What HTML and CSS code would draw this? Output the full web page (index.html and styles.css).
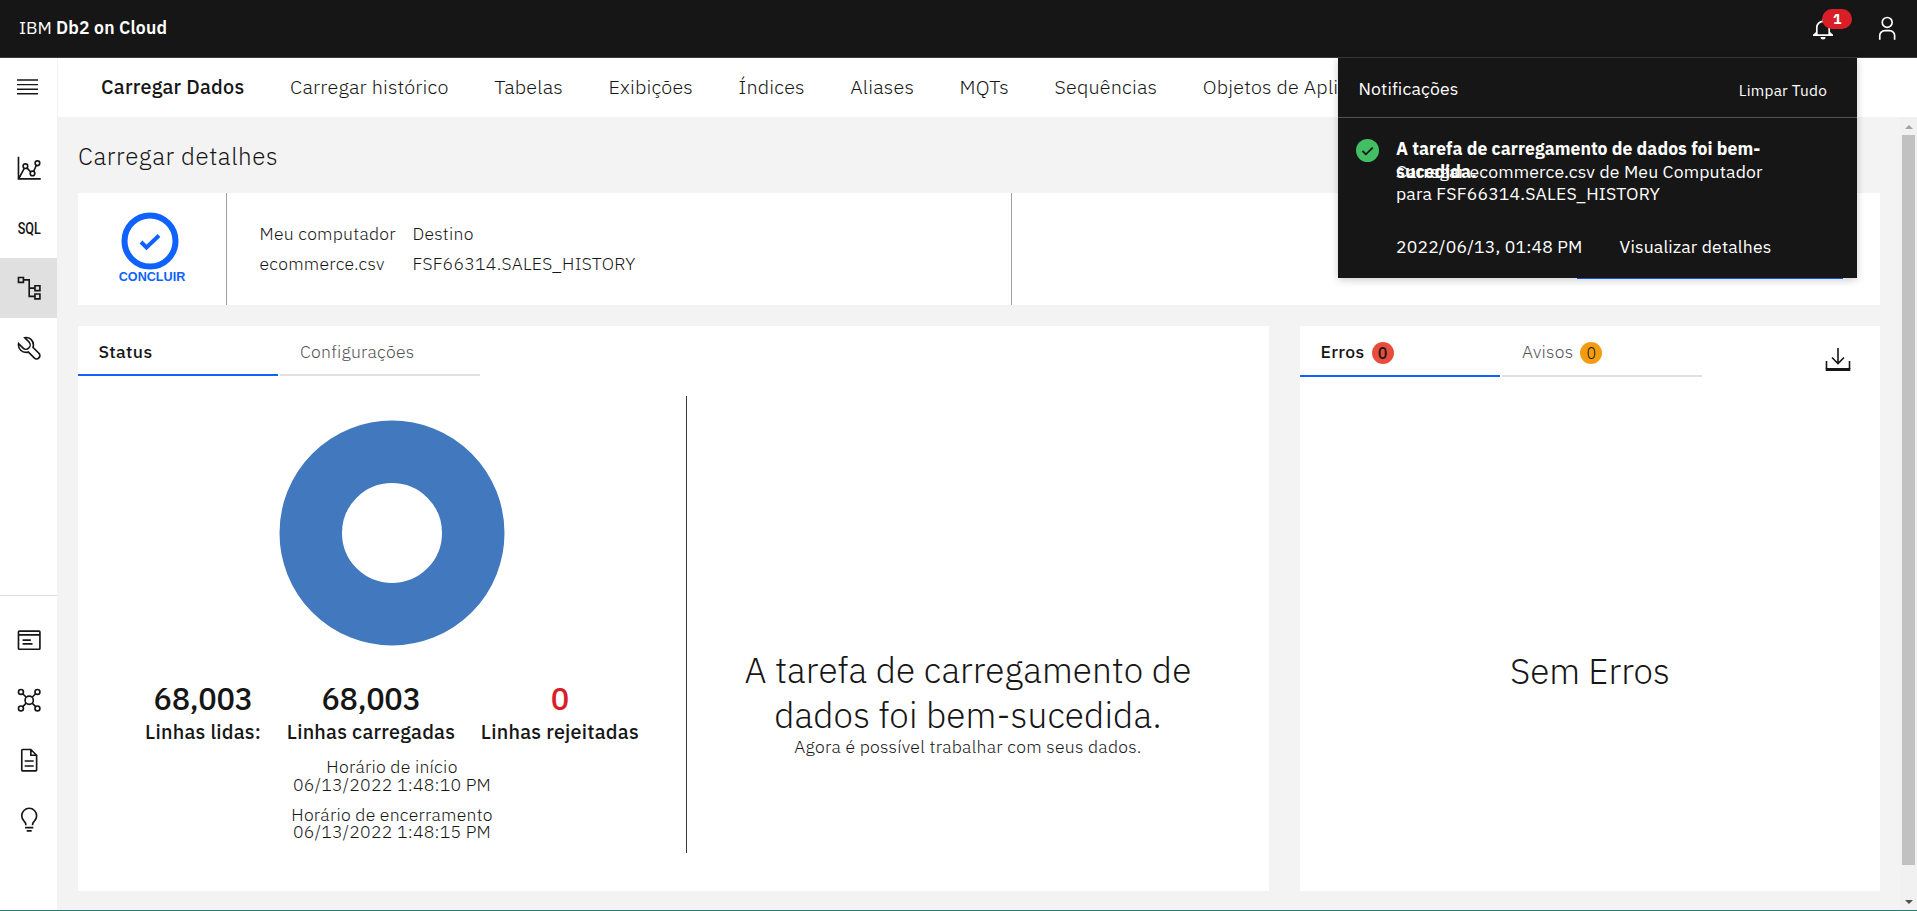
FILE: index.html
```
<!DOCTYPE html>
<html lang="pt-BR">
<head>
<meta charset="utf-8">
<title>IBM Db2 on Cloud</title>
<link rel="stylesheet" href="styles.css">
</head>
<body>
<div class="app">
  <header class="topbar">
    <div class="brand">IBM <b>Db2 on Cloud</b></div>
    <div class="actions">
      <div class="bell">
        <svg class="ico-bell" viewBox="0 0 22 22"><path d="M1 17.200h20M4.800 17V9.500a6.200 6.200 0 0 1 12.400 0V17M11 1v2.500M2 17l3-3M20 17l-3-3"/><path class="clapper" d="M8.500 19h5a2.500 2.500 0 0 1-5 0z"/></svg>
        <span class="count">1</span>
      </div>
      <svg class="ico-user" viewBox="0 0 32 32"><path fill="#fff" d="M16 4a5 5 0 1 1-5 5 5 5 0 0 1 5-5m0-2a7 7 0 1 0 7 7 7 7 0 0 0-7-7zM26 30h-2v-5a5 5 0 0 0-5-5h-6a5 5 0 0 0-5 5v5H6v-5a7 7 0 0 1 7-7h6a7 7 0 0 1 7 7z"/></svg>
    </div>
  </header>
  <div class="shell">
    <aside class="rail">
      <div class="rail-menu"><svg viewBox="0 0 21 16"><path d="M0 1h21M0 5.600h21M0 10.200h21M0 14.700h21"/></svg></div>
      <div class="rail-item"><svg viewBox="0 0 32 32"><path d="M3 2v27h27M3.700 28 10 16.300M13.200 15.600l4.600 5M21.300 20l3.400-7.600"/><circle cx="11.400" cy="13.600" r="2.800"/><circle cx="20" cy="22.300" r="2.800"/><circle cx="26" cy="10" r="2.800"/></svg></div>
      <div class="rail-item"><svg viewBox="0 0 32 32"><text x="2" y="22.900" textLength="28" lengthAdjust="spacingAndGlyphs" class="sql">SQL</text></svg></div>
      <div class="rail-item active"><svg viewBox="0 0 32 32"><path d="M3 3h6v6H3zM23 13h6v6h-6zM23 23h6v6h-6zM9 6h7v20h7M16 16h7"/></svg></div>
      <div class="rail-item"><svg viewBox="0 0 32 32"><path class="solid" d="M12.100 2a9.800 9.800 0 0 0-3.500.6L15 9.100A4.100 4.100 0 0 1 15 15a4.100 4.100 0 0 1-5.900 0L2.600 8.600A9.800 9.800 0 0 0 2 12.100 10.140 10.140 0 0 0 12.100 22.200a10.900 10.900 0 0 0 2.600-.3l6.700 6.700A5 5 0 0 0 28.500 21.500l-6.700-6.700a10.900 10.900 0 0 0 .3-2.600A10 10 0 0 0 12.100 2Zm8 10.100a7.610 7.610 0 0 1-.3 2.100l-.3 1.100.8.8 6.700 6.700A2.900 2.900 0 0 1 27 27a2.900 2.900 0 0 1-4.200 0l-6.700-6.700-.8-.8-1.100.3a7.610 7.610 0 0 1-2.100.3 8.270 8.270 0 0 1-5.700-2.300A7.630 7.630 0 0 1 4 12.700l3.600 3.600a6.100 6.100 0 0 0 8.700 0 6.200 6.200 0 0 0 0-8.700L12.700 4a8.270 8.270 0 0 1 5.100 2.400A8.190 8.190 0 0 1 20.100 12.100Z"/></svg></div>
      <div class="rail-gap"></div>
      <div class="rail-item"><svg viewBox="0 0 32 32"><rect x="3" y="5" width="26" height="22" rx="1"/><path d="M3 9.500h26M8 16h10M8 20.500h12"/></svg></div>
      <div class="rail-item"><svg viewBox="0 0 32 32"><circle cx="16" cy="16" r="5"/><circle cx="6" cy="6" r="3"/><circle cx="26" cy="6" r="3"/><circle cx="6" cy="26" r="3"/><circle cx="26" cy="26" r="3"/><path d="m8.200 8.200 4.200 4.200m11.400-4.200-4.200 4.200m-11.400 11.400 4.200-4.200m11.400 4.200-4.200-4.200"/></svg></div>
      <div class="rail-item"><svg viewBox="0 0 32 32"><path d="M18 3H8a1 1 0 0 0-1 1v24a1 1 0 0 0 1 1h16a1 1 0 0 0 1-1V10zM18 3v7h7M10.500 17h11M10.500 23h11"/></svg></div>
      <div class="rail-item"><svg viewBox="0 0 32 32"><path d="M11 25h10M13 29h6M12 22c0-3-1.200-3.800-2.400-5.100A9 9 0 1 1 22.400 16.900C21.200 18.200 20 19 20 22"/></svg></div>
    </aside>
    <main class="main">
      <nav class="nav">
        <a class="on">Carregar Dados</a><a>Carregar histórico</a><a>Tabelas</a><a>Exibições</a><a>Índices</a><a>Aliases</a><a>MQTs</a><a>Sequências</a><a>Objetos de Aplicativo</a>
      </nav>
      <div class="scroller">
        <div class="content">
          <h1>Carregar detalhes</h1>
          <section class="summary">
            <div class="done">
              <svg viewBox="0 0 58 58"><circle cx="29" cy="29" r="25.500"/><path d="m20 30 5.500 5.500L38 23.500"/></svg>
              <span>CONCLUIR</span>
            </div>
            <div class="source">
              <dl><dt>Meu computador</dt><dd>ecommerce.csv</dd></dl>
              <dl><dt>Destino</dt><dd>FSF66314.SALES_HISTORY</dd></dl>
            </div>
            <div class="next"><div class="next-btn"></div></div>
          </section>
          <div class="panels">
            <section class="panel status">
              <div class="tabs"><div class="tab on"><span>Status</span></div><div class="tab"><span>Configurações</span></div></div>
              <div class="status-body">
                <div class="stats">
                  <svg class="donut" viewBox="0 0 226 226"><circle cx="113" cy="113" r="81.250"/></svg>
                  <div class="figures">
                    <div><strong>68,003</strong><span>Linhas lidas:</span></div>
                    <div><strong>68,003</strong><span>Linhas carregadas</span></div>
                    <div><strong class="red">0</strong><span>Linhas rejeitadas</span></div>
                  </div>
                  <div class="time"><p>Horário de início</p><p>06/13/2022 1:48:10 PM</p></div>
                  <div class="time end"><p>Horário de encerramento</p><p>06/13/2022 1:48:15 PM</p></div>
                </div>
                <div class="message"><h2>A tarefa de carregamento de<br>dados foi bem-sucedida.</h2><p>Agora é possível trabalhar com seus dados.</p></div>
              </div>
            </section>
            <section class="panel errors">
              <div class="errors-top">
                <div class="tabs"><div class="tab on"><span>Erros</span><em class="chip bad">0</em></div><div class="tab"><span>Avisos</span><em class="chip warn">0</em></div></div>
                <svg class="download" viewBox="0 0 26 26"><path d="M13 1v15M7 10.500l6 6 6-6M1.500 14v8M24.500 14v8"/><path class="tray" d="M.7 22.500h24.600"/></svg>
              </div>
              <div class="none">Sem Erros</div>
            </section>
          </div>
        </div>
        <div class="bar"><i class="up"></i><i class="thumb"></i><i class="down"></i></div>
      </div>
    </main>
  </div>
  <div class="edge"></div>
  <section class="toast">
    <header><span>Notificações</span><span class="clear">Limpar Tudo</span></header>
    <div class="toast-body">
      <svg class="ok" viewBox="0 0 23 23"><circle cx="11.500" cy="11.500" r="11.500"/><path d="m6.500 12 3.400 3.300 6.800-6.700"/></svg>
      <div class="toast-text">
        <div class="title">A tarefa de carregamento de dados foi bem-<br>sucedida.</div>
        <div class="desc">Carregar ecommerce.csv de Meu Computador<br>para FSF66314.SALES_HISTORY</div>
        <div class="foot"><span>2022/06/13, 01:48 PM</span><span>Visualizar detalhes</span></div>
      </div>
    </div>
  </section>
</div>
</body>
</html>
```
FILE: styles.css
```
* { box-sizing: border-box; margin: 0; padding: 0; }
body { font-family: "IBM Plex Sans", Roboto, "Liberation Sans", sans-serif; font-size: 17.6px; font-weight: 300; color: #161616; background: #fff; overflow: hidden; }
.app { position: relative; width: 1917px; height: 911px; display: flex; flex-direction: column; }
.topbar { height: 58px; background: #161616; border-bottom: 1px solid #393939; display: flex; justify-content: space-between; color: #fff; }
.brand { padding: 16px 0 0 19px; line-height: 24px; font-size: 17.6px; font-weight: 400; white-space: nowrap; }
.brand b { font-weight: 600; letter-spacing: .18px; }
.actions { display: flex; }
.bell { position: relative; margin: 18px 40px 0 0; width: 22px; height: 22px; }
.ico-bell { width: 22px; height: 22px; display: block; fill: none; stroke: #fff; stroke-width: 1.7; }
.ico-bell .clapper { fill: #fff; stroke: none; }
.count { position: absolute; left: 10px; top: -9px; width: 30px; height: 20px; border-radius: 10px; background: #da1e28; font-weight: 700; font-size: 14px; line-height: 20px; text-align: center; }
.ico-user { width: 26.4px; height: 26.4px; margin: 15px 16.5px 0 0; }
.shell { flex: 1; display: flex; min-height: 0; }
.rail { width: 58px; border-right: 1px solid #f3f3f3; display: flex; flex-direction: column; }
.rail-menu { height: 80px; padding: 21px 0 0 17px; }
.rail-menu svg { display: block; width: 21px; height: 16px; fill: none; stroke: #161616; stroke-width: 1.4; }
.rail-item { height: 60px; width: 57px; display: flex; align-items: center; justify-content: center; padding: 1px 0 0 2px; }
.rail-item.active { background: #e0e0e0; }
.rail-item svg { width: 26.4px; height: 26.4px; fill: none; stroke: #161616; stroke-width: 2; overflow: visible; }
.rail-item .solid { fill: #161616; stroke: none; }
.rail-item .sql { font: 500 20px Roboto, sans-serif; fill: #161616; stroke: none; }
.rail-gap { height: 218px; border-bottom: 1px solid #e0e0e0; width: 57px; margin-bottom: 14px; }
.main { flex: 1; display: flex; flex-direction: column; min-width: 0; }
.nav { height: 59px; display: flex; gap: 45.6px; padding: 15px 0 0 43px; font-size: 19.8px; line-height: 28px; letter-spacing: .18px; white-space: nowrap; overflow: hidden; }
.nav a { flex: none; }
.nav .on { font-weight: 500; letter-spacing: .24px; }
.scroller { flex: 1; display: flex; background: #f3f3f3; min-height: 0; }
.content { width: 1822px; padding-left: 20px; }
h1 { font-size: 24.2px; font-weight: 300; line-height: 32px; padding: 23px 0 21px; letter-spacing: .57px; white-space: nowrap; }
.summary { height: 112px; background: #fff; display: flex; }
.done { width: 149px; border-right: 1px solid #a0a0a0; display: flex; flex-direction: column; align-items: center; padding: 19px 4px 0 0; }
.done svg { width: 58px; height: 58px; fill: none; stroke: #0f62fe; stroke-width: 6; flex: none; }
.done path { stroke-width: 4; }
.done span { font: 700 12.6px/14px "Liberation Sans", sans-serif; color: #0f62fe; margin-left: 4px; }
.source { width: 785px; border-right: 1px solid #a0a0a0; display: flex; padding: 26px 0 0 32.5px; line-height: 30px; letter-spacing: .25px; white-space: nowrap; }
.source dl { width: 153px; }
.next { flex: 1; display: flex; justify-content: flex-end; align-items: flex-start; padding-right: 37px; }
.next-btn { width: 266px; height: 52px; margin-top: 34px; background: #0f62fe; }
.panels { display: flex; gap: 31px; padding-top: 21px; }
.panel { background: #fff; height: 565px; }
.status { width: 1191px; }
.errors { width: 580px; }
.tabs { display: flex; gap: 2px; }
.tab { width: 200px; height: 50px; border-bottom: 2px solid #e0e0e0; padding: 14px 0 0 20px; line-height: 24px; letter-spacing: .25px; color: #525252; display: flex; }
.tab.on { font-weight: 500; color: #161616; border-color: #0f62fe; letter-spacing: .35px; padding-left: 20.5px; }
.errors .tab { height: 51px; }
.status-body { display: flex; padding-top: 20px; }
.stats { width: 609px; height: 457px; border-right: 1px solid #393939; display: flex; flex-direction: column; align-items: center; padding: 24px 0 0 20px; }
.donut { width: 226px; height: 226px; fill: none; stroke: #4178be; stroke-width: 62.5; flex: none; }
.figures { display: flex; gap: 25.6px; margin-top: 33px; text-align: center; white-space: nowrap; font-weight: 500; }
.figures strong { display: block; font-size: 30.8px; line-height: 38px; font-weight: 500; letter-spacing: -.35px; }
.figures span { display: block; font-size: 19.8px; line-height: 30px; letter-spacing: .24px; }
.figures .red { color: #da1e28; }
.time { line-height: 17.6px; text-align: center; margin-top: 11px; letter-spacing: .25px; white-space: nowrap; }
.time.end { margin-top: 12.4px; }
.message { flex: 1; text-align: center; padding: 252px 20px 0 0; white-space: nowrap; }
.message h2 { font-size: 35.2px; line-height: 45px; font-weight: 300; letter-spacing: .13px; }
.message p { line-height: 18px; letter-spacing: .27px; }
.errors-top { display: flex; justify-content: space-between; }
.chip { font-style: normal; width: 22px; height: 22px; border-radius: 50%; text-align: center; line-height: 23px; font-size: 16px; letter-spacing: 0; color: #161616; margin: 2px 0 0 7px; }
.bad { background: #e74c3c; }
.warn { background: #f39c12; }
.download { width: 26px; height: 26px; margin: 21px 29.5px 0 0; fill: none; stroke: #161616; stroke-width: 1.6; }
.download .tray { stroke-width: 3; }
.none { text-align: center; padding-top: 272px; font-size: 35.2px; line-height: 45px; }
.bar { flex: 1; background: #f1f1f1; margin-left: 20px; display: flex; flex-direction: column; align-items: center; }
.bar i { display: block; }
.bar .up { border: 4px solid transparent; border-top: 0; border-bottom: 4px solid #a3a3a3; margin-top: 8px; }
.bar .thumb { width: 13px; height: 730px; margin-top: 6px; background: #c1c1c1; }
.bar .down { border: 4px solid transparent; border-bottom: 0; border-top: 4px solid #505050; margin-top: 35px; }
.edge { height: 1px; background: #2b7a78; }
.toast { position: absolute; left: 1338px; top: 58px; width: 519px; height: 220px; background: #161616; color: #fff; font-weight: 400; letter-spacing: .16px; box-shadow: 0 2px 8px rgba(0,0,0,.2); white-space: nowrap; }
.toast header { height: 60px; border-bottom: 1px solid #525252; display: flex; justify-content: space-between; padding: 18px 30px 0 20.5px; line-height: 26px; }
.toast .clear { font-size: 15.4px; padding-top: 1px; letter-spacing: .22px; }
.toast-body { display: flex; padding: 21px 0 0 18px; gap: 17px; }
.ok { width: 23px; height: 23px; }
.ok circle { fill: #42be65; }
.ok path { fill: none; stroke: #161616; stroke-width: 1.8; }
.title { font-weight: 700; line-height: 23px; height: 24px; margin-top: -2px; letter-spacing: .04px; }
.desc { line-height: 22px; }
.foot { margin-top: 30px; display: flex; gap: 37px; line-height: 24px; }
```
